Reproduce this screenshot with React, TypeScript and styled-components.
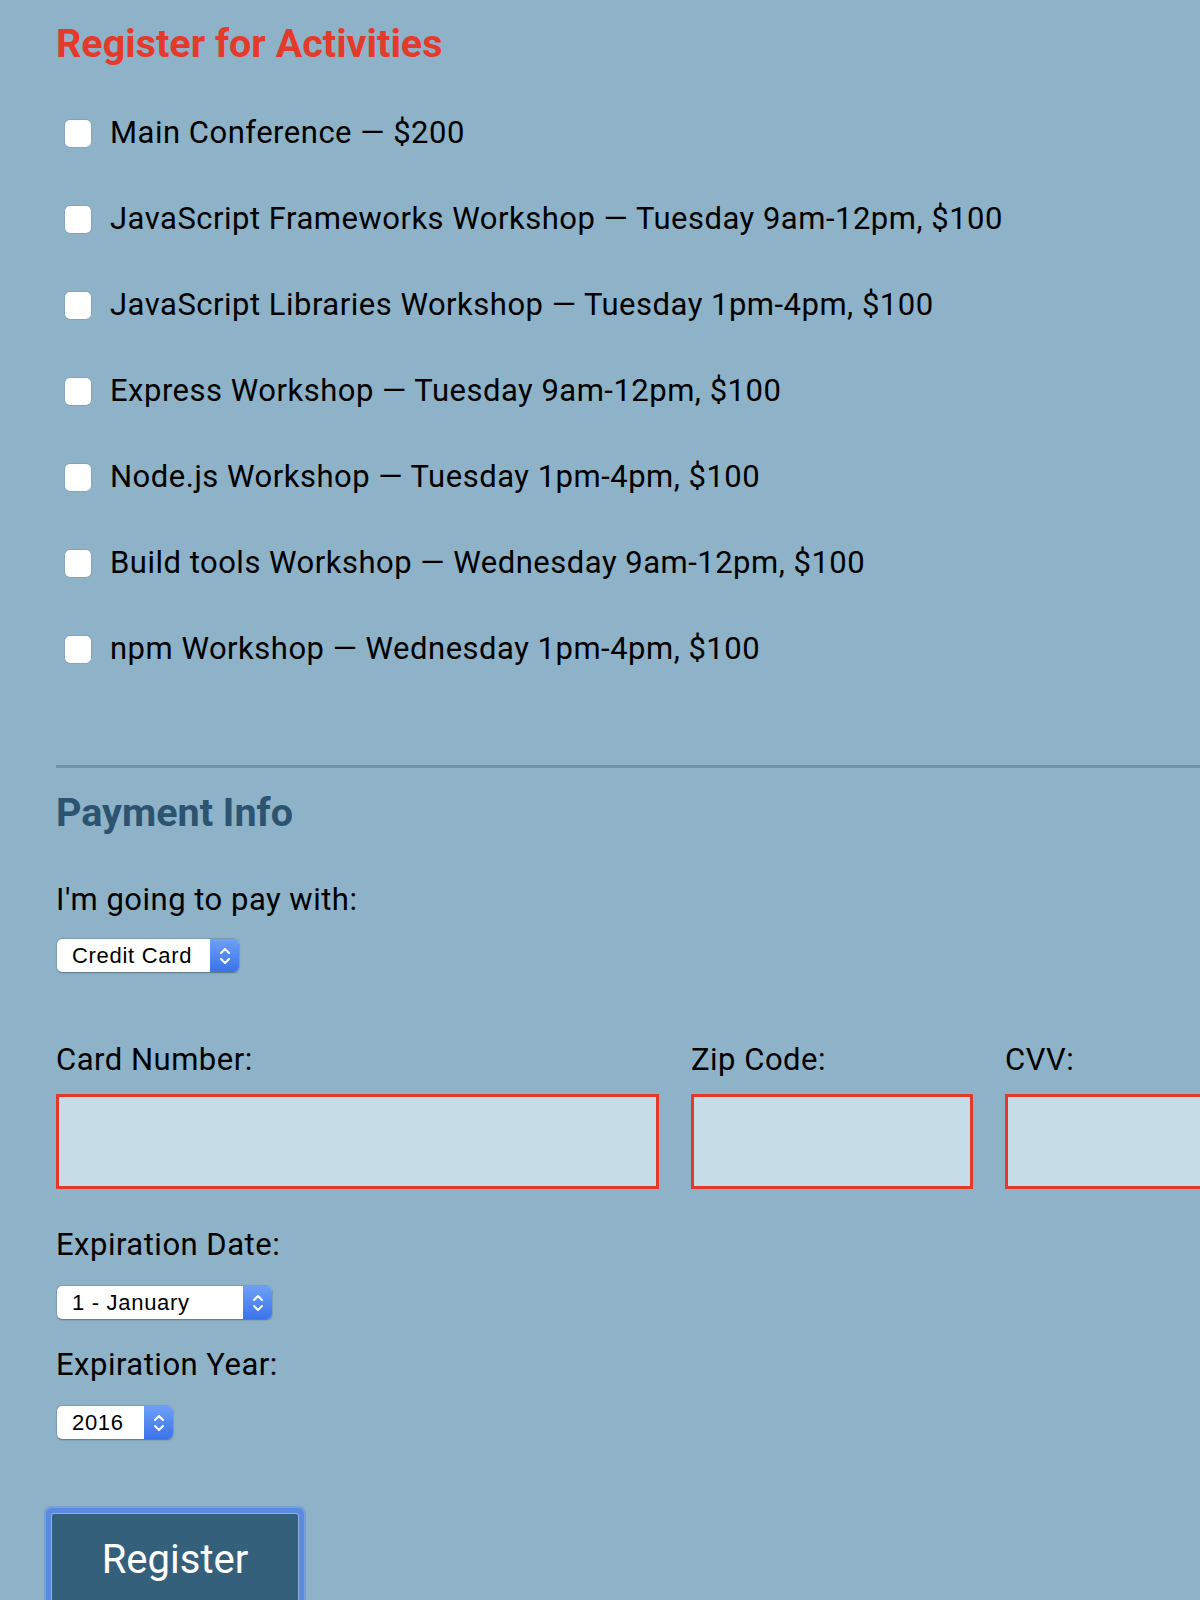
import React from "react";
import styled, { createGlobalStyle } from "styled-components";

const Global = createGlobalStyle`
  html, body { margin: 0; padding: 0; overflow-x: hidden; }
  body {
    background: #8eb2c7;
    font-family: Roboto, "Noto Sans", sans-serif;
    color: #000;
  }
`;

const Page = styled.form`
  padding: 20px 0 0 56px;
  min-height: 1600px;
  box-sizing: border-box;
`;

const Heading = styled.h2<{ $tone: "red" | "navy" }>`
  margin: 0;
  font-size: 39.5px;
  line-height: 48px;
  font-weight: 700;
  color: ${(p) => (p.$tone === "red" ? "#e43a2b" : "#2c5471")};
`;

const ActivityList = styled.div`
  display: flex;
  flex-direction: column;
  gap: 50px;
  margin-top: 47px;
`;

const ActivityRow = styled.label`
  display: flex;
  align-items: center;
  gap: 19px;
  font-size: 31px;
  letter-spacing: 0.5px;
  line-height: 36px;
`;

const Check = styled.input`
  appearance: none;
  -webkit-appearance: none;
  margin: 1px 0 0 9px;
  width: 26px;
  height: 27px;
  border-radius: 5px;
  background: #fff;
  box-shadow: 0 0 0 0.5px rgba(60, 80, 100, 0.25);
  flex-shrink: 0;
`;

const PaymentSection = styled.section`
  margin-top: 98px;
  border-top: 3px solid #6d93aa;
  padding-top: 21px;
`;

const FieldLabel = styled.label<{ $mt: number }>`
  display: block;
  margin-top: ${(p) => p.$mt}px;
  font-size: 31px;
  letter-spacing: 0.5px;
  line-height: 36px;
`;

const SelectBox = styled.div<{ $w: number; $mt: number }>`
  display: flex;
  width: ${(p) => p.$w}px;
  height: 33px;
  margin-top: ${(p) => p.$mt}px;
  margin-left: 1px;
  border-radius: 5px;
  background: #fff;
  box-shadow: 0 0.5px 1.5px rgba(0, 0, 0, 0.3), 0 0 0 0.5px rgba(0, 0, 0, 0.12);
  overflow: hidden;
`;

const NativeSelect = styled.select`
  appearance: none;
  -webkit-appearance: none;
  flex: 1;
  min-width: 0;
  border: 0;
  background: transparent;
  padding: 0 0 0 15px;
  font-family: "Liberation Sans", Arial, sans-serif;
  font-size: 22px;
  letter-spacing: 0.7px;
  color: #000;
  outline: none;
`;

const Stepper = styled.span`
  width: 29px;
  flex-shrink: 0;
  display: flex;
  align-items: center;
  justify-content: center;
  background: linear-gradient(#6ea0f7, #3a73ea);
`;

const Chevrons = () => (
  <svg width="14" height="22" viewBox="0 0 14 22" fill="none" stroke="#fff" strokeWidth="2" strokeLinecap="round" strokeLinejoin="round">
    <path d="M3 8 L7 4 L11 8" />
    <path d="M3 14 L7 18 L11 14" />
  </svg>
);

const Select = ({ w, mt, options }: { w: number; mt: number; options: string[] }) => (
  <SelectBox $w={w} $mt={mt}>
    <NativeSelect defaultValue={options[0]}>
      {options.map((o) => (
        <option key={o}>{o}</option>
      ))}
    </NativeSelect>
    <Stepper>
      <Chevrons />
    </Stepper>
  </SelectBox>
);

const CardRow = styled.div`
  display: flex;
  gap: 32px;
  margin-top: 70px;
`;

const CardField = styled.div<{ $w: number }>`
  width: ${(p) => p.$w}px;
  flex-shrink: 0;
  display: flex;
  flex-direction: column;
  gap: 16px;
`;

const CardLabel = styled.label`
  font-size: 31px;
  letter-spacing: 0.5px;
  line-height: 36px;
`;

const TextInput = styled.input`
  box-sizing: border-box;
  width: 100%;
  height: 95px;
  border: 3px solid #e3392b;
  background: #c6dce6;
  outline: none;
  font-size: 30px;
  padding: 0 12px;
`;

const SubmitButton = styled.button`
  margin: 75px 0 0 -4px;
  width: 246px;
  height: 92px;
  border: 0;
  border-radius: 2px;
  background: #34607c;
  color: #fff;
  font-family: Roboto, sans-serif;
  font-size: 40px;
  line-height: 48px;
  padding: 0;
  box-shadow: 0 0 0 1px #8fb0dc, 0 0 0 6px #5a8be0, 0 0 0 8px rgba(91, 140, 226, 0.45);
`;

const activities = [
  "Main Conference — $200",
  "JavaScript Frameworks Workshop — Tuesday 9am-12pm, $100",
  "JavaScript Libraries Workshop — Tuesday 1pm-4pm, $100",
  "Express Workshop — Tuesday 9am-12pm, $100",
  "Node.js Workshop — Tuesday 1pm-4pm, $100",
  "Build tools Workshop — Wednesday 9am-12pm, $100",
  "npm Workshop — Wednesday 1pm-4pm, $100",
];

const months = [
  "1 - January", "2 - February", "3 - March", "4 - April", "5 - May", "6 - June",
  "7 - July", "8 - August", "9 - September", "10 - October", "11 - November", "12 - December",
];

export default function App() {
  return (
    <>
      <Global />
      <Page onSubmit={(e) => e.preventDefault()}>
        <Heading $tone="red">Register for Activities</Heading>
        <ActivityList>
          {activities.map((a) => (
            <ActivityRow key={a}>
              <Check type="checkbox" />
              {a}
            </ActivityRow>
          ))}
        </ActivityList>

        <PaymentSection>
          <Heading $tone="navy">Payment Info</Heading>
          <FieldLabel $mt={45}>I'm going to pay with:</FieldLabel>
          <Select w={182} mt={21} options={["Credit Card", "PayPal", "Bitcoin"]} />

          <CardRow>
            <CardField $w={603}>
              <CardLabel>Card Number:</CardLabel>
              <TextInput type="text" />
            </CardField>
            <CardField $w={282}>
              <CardLabel>Zip Code:</CardLabel>
              <TextInput type="text" />
            </CardField>
            <CardField $w={282}>
              <CardLabel>CVV:</CardLabel>
              <TextInput type="text" />
            </CardField>
          </CardRow>

          <FieldLabel $mt={38}>Expiration Date:</FieldLabel>
          <Select w={215} mt={23} options={months} />
          <FieldLabel $mt={28}>Expiration Year:</FieldLabel>
          <Select w={116} mt={23} options={["2016", "2017", "2018", "2019", "2020"]} />

          <SubmitButton type="submit">Register</SubmitButton>
        </PaymentSection>
      </Page>
    </>
  );
}
